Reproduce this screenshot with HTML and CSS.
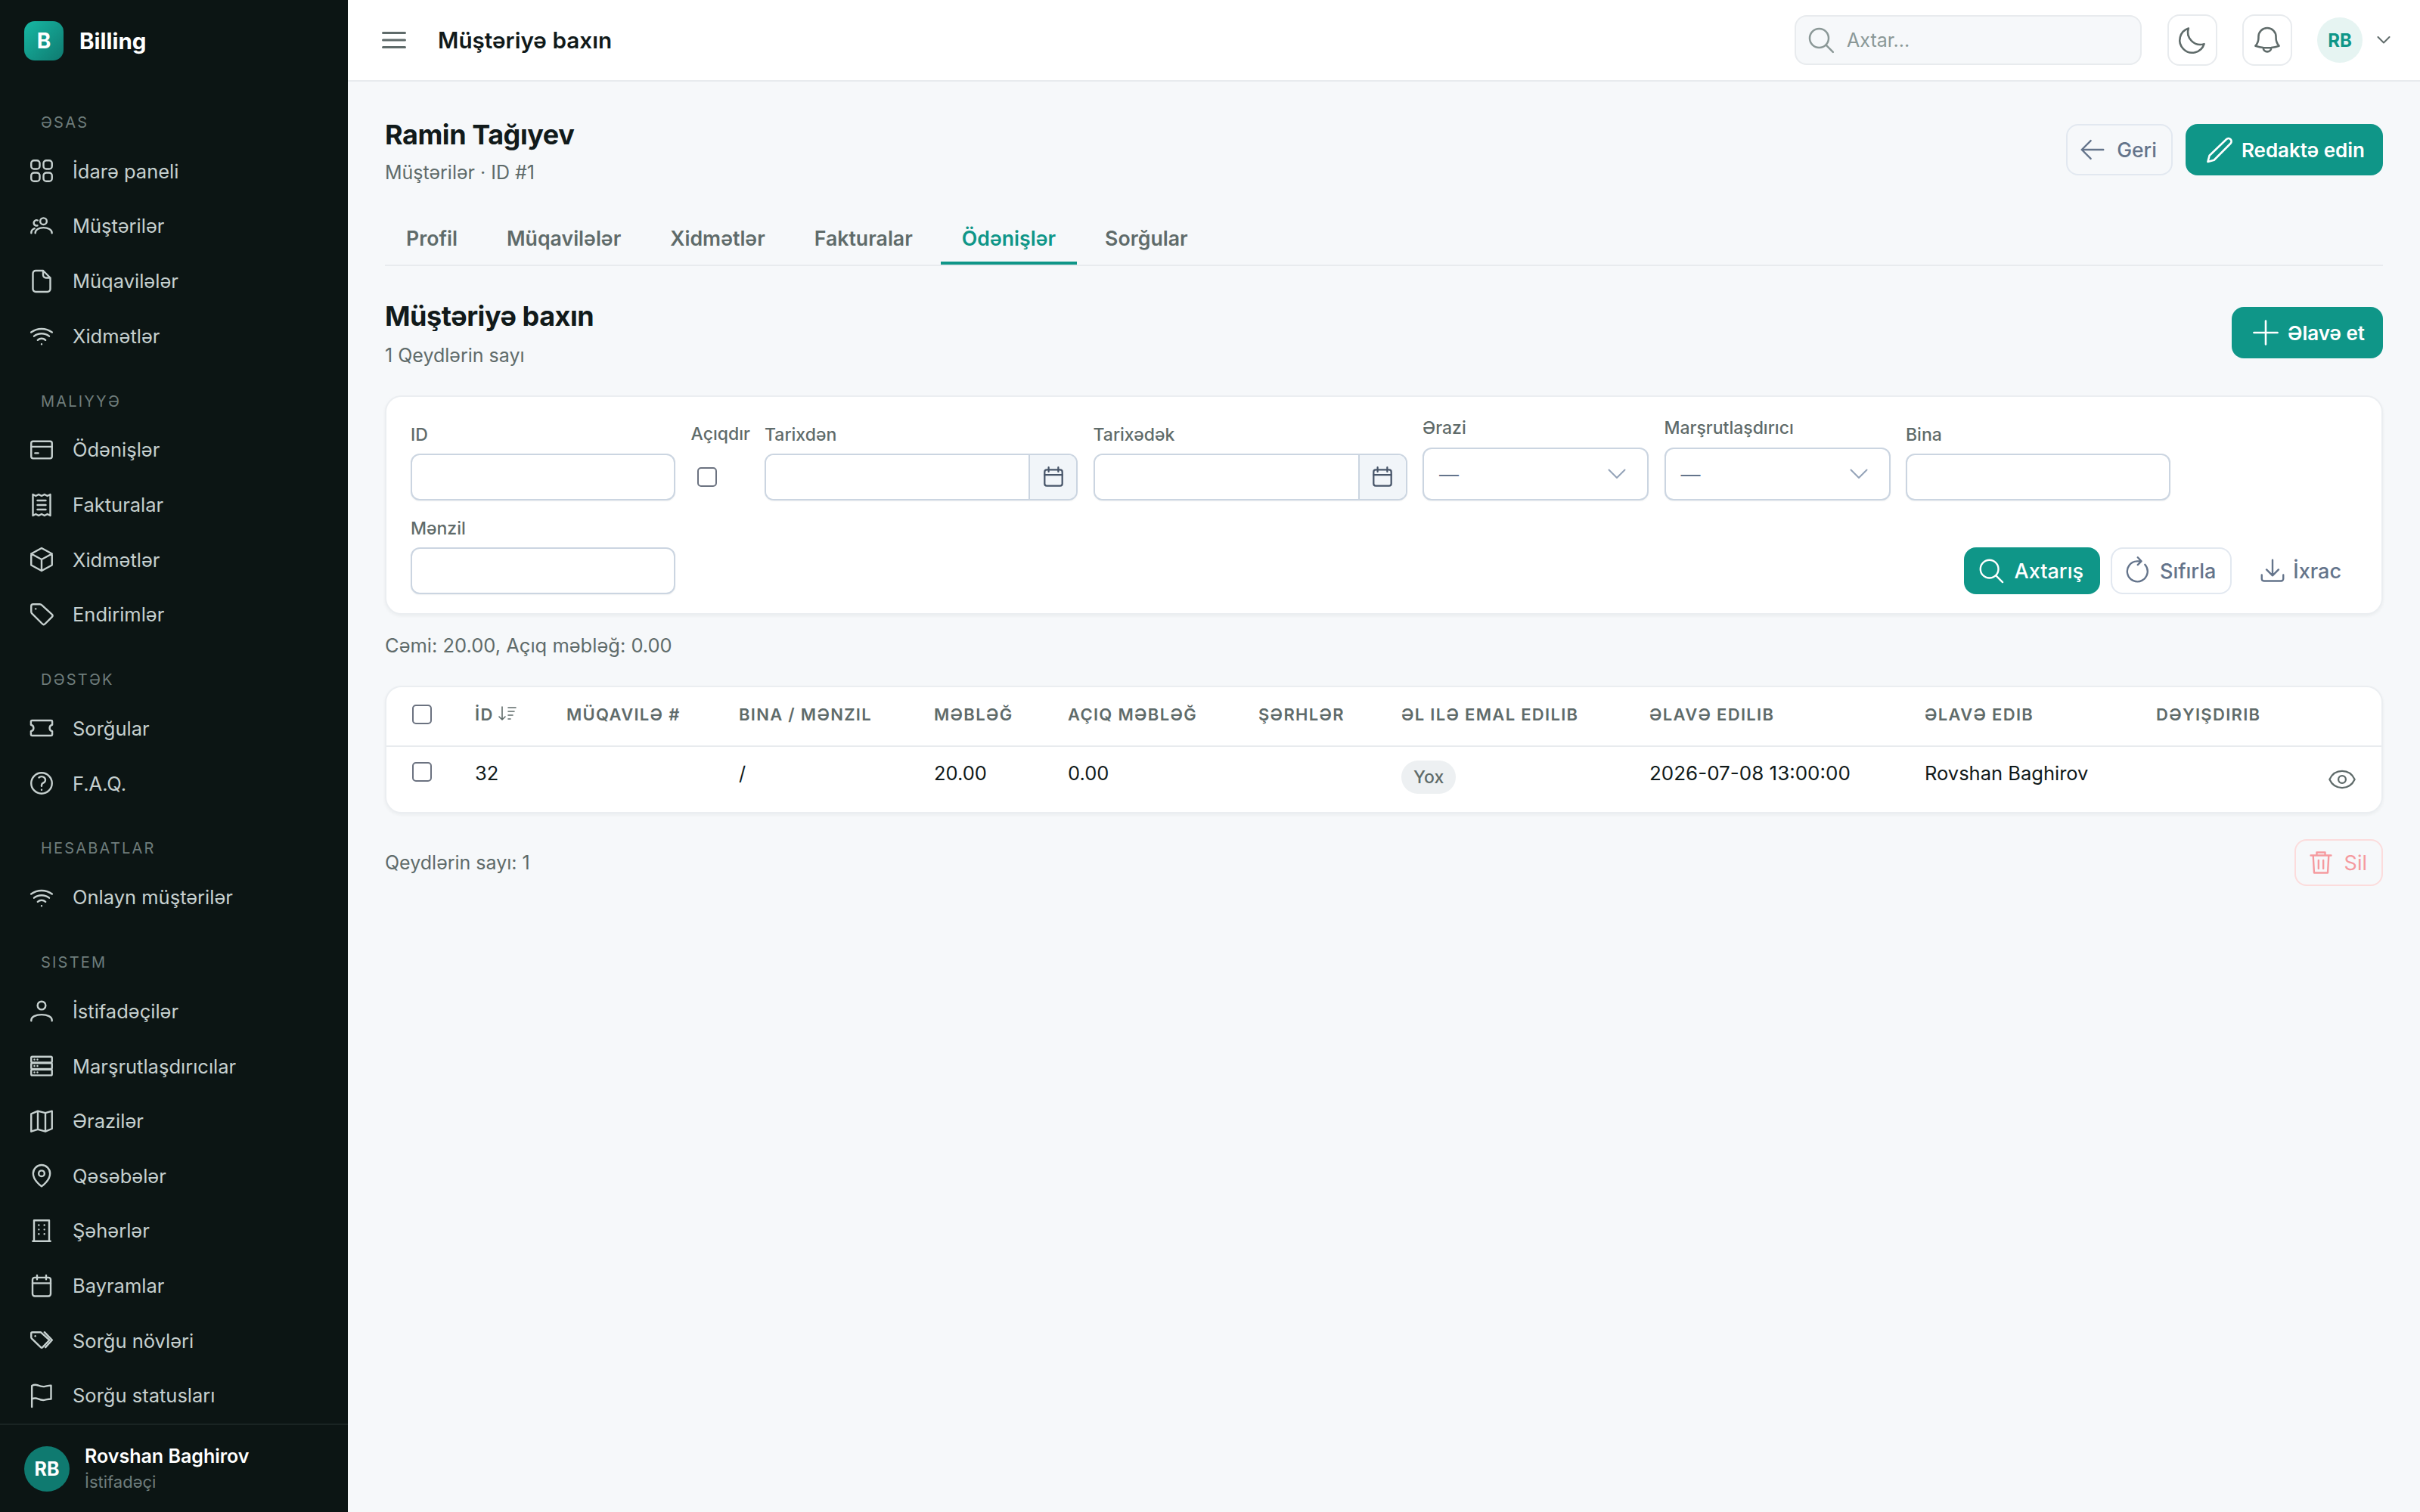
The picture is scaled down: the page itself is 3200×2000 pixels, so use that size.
FILE: index.html
```html
<!DOCTYPE html>
<html lang="az">
  <head>
    <meta charset="utf-8">
    <title>Müştəriyə baxın</title>
    <link rel="stylesheet" href="styles.css">
  </head>
  <body>
    <div class="app">
      <aside class="sidebar">
        <div class="brand">
          <span class="brand-logo">B</span>
          <span class="brand-name">Billing</span>
        </div>
        <nav class="nav">
          <div class="nav-label">ƏSAS</div>
          <a class="nav-item"><svg class="nav-icon" viewBox="0 0 24 24"><path d="M3.75 6A2.25 2.25 0 0 1 6 3.75h2.25A2.25 2.25 0 0 1 10.5 6v2.25a2.25 2.25 0 0 1-2.25 2.25H6a2.25 2.25 0 0 1-2.25-2.25V6ZM3.75 15.75A2.25 2.25 0 0 1 6 13.5h2.25a2.25 2.25 0 0 1 2.25 2.25V18a2.25 2.25 0 0 1-2.25 2.25H6A2.25 2.25 0 0 1 3.75 18v-2.25ZM13.5 6a2.25 2.25 0 0 1 2.25-2.25H18A2.25 2.25 0 0 1 20.25 6v2.25A2.25 2.25 0 0 1 18 10.5h-2.25a2.25 2.25 0 0 1-2.25-2.25V6ZM13.5 15.75a2.25 2.25 0 0 1 2.25-2.25H18a2.25 2.25 0 0 1 2.25 2.25V18A2.25 2.25 0 0 1 18 20.25h-2.25A2.25 2.25 0 0 1 13.5 18v-2.25Z"/></svg>İdarə paneli</a>
          <a class="nav-item"><svg class="nav-icon" viewBox="0 0 24 24"><circle cx="13.5" cy="8.2" r="2.6"/><path d="M7 17.5c0-2.6 2.9-4.2 6.5-4.2s6.7 1.6 6.7 4.2M3.8 17.5c0-1.8.9-3 2.6-3.6M8.7 11.6a2.2 2.2 0 1 1-1.4-4.2c.6-.2 1.1-.1 1.6.1"/></svg>Müştərilər</a>
          <a class="nav-item"><svg class="nav-icon" viewBox="0 0 24 24"><path d="M13.2 3.6H7.3a2.2 2.2 0 0 0-2.2 2.2v12.4a2.2 2.2 0 0 0 2.2 2.2h9.4a2.2 2.2 0 0 0 2.2-2.2V9.3Zm0 0v3.5a2.2 2.2 0 0 0 2.2 2.2h3.5"/></svg>Müqavilələr</a>
          <a class="nav-item"><svg class="nav-icon" viewBox="0 0 24 24"><path d="M8.9 15.5a4.6 4.6 0 0 1 6.2 0M6 12.4c3.4-2.7 8.6-2.7 12 0M3.7 9.3c4.9-3.6 11.700-3.6 16.6 0M12 18.7h.01"/></svg>Xidmətlər</a>

          <div class="nav-label">MALIYYƏ</div>
          <a class="nav-item"><svg class="nav-icon" viewBox="0 0 24 24"><rect x="3.75" y="5.2" width="16.5" height="13.6" rx="1.5"/><path d="M3.75 9.5h16.5M6.8 14.6h2.6"/></svg>Ödənişlər</a>
          <a class="nav-item"><svg class="nav-icon" viewBox="0 0 24 24"><path d="M5.1 3.6 7.4 4.8 9.7 3.6 12 4.8l2.3-1.2 2.3 1.2 2.3-1.2v16.8l-2.3-1.2-2.3 1.2-2.3-1.2-2.3 1.2-2.3-1.2-2.3 1.2ZM8.7 8.4h6.6M8.7 12h6.6M8.7 15.6h6.6"/></svg>Fakturalar</a>
          <a class="nav-item"><svg class="nav-icon" viewBox="0 0 24 24"><path d="m20.25 7.5-8.25-4.5-8.25 4.5m16.5 0L12 12m8.25-4.5v9L12 21l-8.25-4.5v-9M3.75 7.5 12 12m0 0v9"/></svg>Xidmətlər</a>
          <a class="nav-item"><svg class="nav-icon" viewBox="0 0 24 24"><path d="M9.568 3.75H5.25a1.5 1.5 0 0 0-1.5 1.5v4.318c0 .597.237 1.17.659 1.591l8.2 8.2c.6.6 1.5.6 2.1 0l5.5-5.5c.6-.6.6-1.5 0-2.1l-8.05-7.3a2.25 2.25 0 0 0-1.591-.709Z"/><path d="M7.3 7.4h.01"/></svg>Endirimlər</a>

          <div class="nav-label">DƏSTƏK</div>
          <a class="nav-item"><svg class="nav-icon" viewBox="0 0 24 24"><path d="M4.3 6h15.4a.75.75 0 0 1 .75.75v2.7a2.6 2.6 0 0 0 0 5.1v2.7a.75.75 0 0 1-.75.75H4.3a.75.75 0 0 1-.75-.75v-2.7a2.6 2.6 0 0 0 0-5.1v-2.7A.75.75 0 0 1 4.3 6Z"/></svg>Sorğular</a>
          <a class="nav-item"><svg class="nav-icon" viewBox="0 0 24 24"><path d="M9.879 7.519c1.171-1.025 3.071-1.025 4.242 0 1.172 1.025 1.172 2.687 0 3.712-.203.179-.43.326-.67.442-.745.361-1.45.999-1.45 1.827v.75M20.25 12a8.25 8.25 0 1 1-16.5 0 8.25 8.25 0 0 1 16.5 0Zm-8.25 5.25h.01"/></svg>F.A.Q.</a>

          <div class="nav-label">HESABATLAR</div>
          <a class="nav-item"><svg class="nav-icon" viewBox="0 0 24 24"><path d="M8.9 15.5a4.6 4.6 0 0 1 6.2 0M6 12.4c3.4-2.7 8.6-2.7 12 0M3.7 9.3c4.9-3.6 11.7-3.6 16.6 0M12 18.7h.01"/></svg>Onlayn müştərilər</a>

          <div class="nav-label">SISTEM</div>
          <a class="nav-item"><svg class="nav-icon" viewBox="0 0 24 24"><circle cx="12" cy="7.8" r="3.2"/><path d="M3.8 20v-.6c0-2.7 3.5-4.3 8.2-4.3s8.2 1.6 8.2 4.3v.6"/></svg>İstifadəçilər</a>
          <a class="nav-item"><svg class="nav-icon" viewBox="0 0 24 24"><rect x="3.75" y="4.6" width="16.5" height="4.6" rx=".8"/><rect x="3.75" y="9.7" width="16.5" height="4.6" rx=".8"/><rect x="3.75" y="14.8" width="16.5" height="4.6" rx=".8"/><path d="M6.3 6.9h.01M8.7 6.9h.01M6.3 12h.01M8.7 12h.01M6.3 17.1h.01M8.7 17.1h.01"/></svg>Marşrutlaşdırıcılar</a>
          <a class="nav-item"><svg class="nav-icon" viewBox="0 0 24 24"><path d="M9 4v14.5M15 5.5V20M9 4 3.75 6.2v14l5.25-1.7 6 1.7 5.25-2.2v-14L15 5.5Z"/></svg>Ərazilər</a>
          <a class="nav-item"><svg class="nav-icon" viewBox="0 0 24 24"><circle cx="12" cy="10.3" r="2.3"/><path d="M18.7 10.3c0 5.6-6.7 10.3-6.7 10.3s-6.7-4.7-6.7-10.3a6.7 6.7 0 1 1 13.4 0Z"/></svg>Qəsəbələr</a>
          <a class="nav-item"><svg class="nav-icon" viewBox="0 0 24 24"><path d="M6 20.25V3.75h12v16.5M5 20.25h14M9.8 7.5h.01M14.2 7.5h.01M9.8 11h.01M14.2 11h.01M9.8 14.5h.01M14.2 14.5h.01"/></svg>Şəhərlər</a>
          <a class="nav-item"><svg class="nav-icon" viewBox="0 0 24 24"><rect x="4.8" y="5.3" width="14.4" height="14.8" rx="1.8"/><path d="M8.4 3.5v3.2M15.6 3.5v3.2M4.8 9.8h14.4"/></svg>Bayramlar</a>
          <a class="nav-item"><svg class="nav-icon" viewBox="0 0 24 24"><path d="M3.75 6.5a1 1 0 0 1 1-1h6.5l7 6.2-5.5 5.8a1 1 0 0 1-1.4 0L4.2 10.6a1.5 1.5 0 0 1-.45-1Z"/><path d="m14.3 5.5 6 6.2-5.2 5.8"/><path d="M7 8.5h.01"/></svg>Sorğu növləri</a>
          <a class="nav-item"><svg class="nav-icon" viewBox="0 0 24 24"><path d="M4.3 21V4.2c1.5-.9 3.1-1 5-.3 2 .9 3.7 1.2 5.5.8 1.6-.3 3-.8 4.7-.7v10.7c-1.7-.1-3 .4-4.7.7-1.8.4-3.5.1-5.5-.8-1.900-.7-3.5-.6-5 .3"/></svg>Sorğu statusları</a>
        </nav>
        <div class="side-user">
          <span class="side-avatar">RB</span>
          <div>
            <div class="side-name">Rovshan Baghirov</div>
            <div class="side-role">İstifadəçi</div>
          </div>
        </div>
      </aside>

      <div class="main">
        <header class="topbar">
          <svg class="menu-icon" viewBox="0 0 34 24"><path d="M2.5 2.5h29M2.5 12h29M2.5 21.5h29"/></svg>
          <div class="topbar-title">Müştəriyə baxın</div>
          <div class="search">
            <svg class="search-icon" viewBox="0 0 24 24"><circle cx="10.5" cy="10.5" r="7.5"/><path d="m16 16 5.5 5.5"/></svg>
            <span>Axtar...</span>
          </div>
          <button class="icon-btn"><svg viewBox="0 0 24 24"><path d="M20.5 14.8A9 9 0 0 1 9.2 3.5a9 9 0 1 0 11.3 11.3Z"/></svg></button>
          <button class="icon-btn"><svg viewBox="0 0 24 24"><path d="M14.9 17.5a24 24 0 0 0 5.6-1.3 8.9 8.9 0 0 1-2.2-5.9V9.6a6.3 6.3 0 0 0-12.6 0v.7a8.9 8.9 0 0 1-2.2 5.9c1.8.6 3.7 1.1 5.6 1.3m5.800 0a36 36 0 0 1-5.8 0m5.8 0a2.9 2.9 0 1 1-5.8 0"/></svg></button>
          <span class="top-avatar">RB</span>
          <svg class="top-chevron" viewBox="0 0 18 10"><path d="m1.5 1 7.5 7.5L16.5 1"/></svg>
        </header>

        <main class="content">
          <div class="page-head">
            <div>
              <h1 class="page-title">Ramin Tağıyev</h1>
              <div class="page-sub">Müştərilər · ID #1</div>
            </div>
            <div class="head-actions">
              <button class="btn btn-light"><svg viewBox="0 0 24 24"><path d="M10.5 19.5 3 12l7.5-7.5M3 12h18"/></svg>Geri</button>
              <button class="btn btn-primary"><svg viewBox="0 0 24 24"><path d="M16.9 4.5a2.1 2.1 0 0 1 3 3L8 19.5l-4.5 1.2L4.7 16.2Z"/></svg>Redaktə edin</button>
            </div>
          </div>

          <div class="tabs">
            <a class="tab">Profil</a>
            <a class="tab">Müqavilələr</a>
            <a class="tab">Xidmətlər</a>
            <a class="tab">Fakturalar</a>
            <a class="tab tab-active">Ödənişlər</a>
            <a class="tab">Sorğular</a>
          </div>

          <div class="section-head">
            <div>
              <h2 class="page-title">Müştəriyə baxın</h2>
              <div class="page-sub">1 Qeydlərin sayı</div>
            </div>
            <button class="btn btn-primary"><svg viewBox="0 0 24 24"><path d="M12 3.5v17M3.5 12h17"/></svg>Əlavə et</button>
          </div>

          <form class="filters">
            <label class="field field-wide"><span class="field-label">ID</span><input class="input" type="text"></label>
            <label class="field field-check"><span class="field-label label-up">Açıqdır</span><input class="check check-filter" type="checkbox"></label>
            <label class="field field-date"><span class="field-label">Tarixdən</span>
              <span class="date-input"><input class="date-text" type="text"><span class="date-addon"><svg viewBox="0 0 24 24"><rect x="3.75" y="5.25" width="16.5" height="15" rx="2"/><path d="M7.5 3v4M16.5 3v4M3.75 10h16.5"/></svg></span></span>
            </label>
            <label class="field field-date field-date2"><span class="field-label">Tarixədək</span>
              <span class="date-input"><input class="date-text" type="text"><span class="date-addon"><svg viewBox="0 0 24 24"><rect x="3.75" y="5.25" width="16.5" height="15" rx="2"/><path d="M7.5 3v4M16.5 3v4M3.75 10h16.5"/></svg></span></span>
            </label>
            <div class="field field-select"><span class="field-label label-up">Ərazi</span>
              <div class="select"><span>—</span><svg viewBox="0 0 24 14"><path d="m1.5 1.5 10.5 10.5 10.5-10.5"/></svg></div>
            </div>
            <div class="field field-select"><span class="field-label label-up">Marşrutlaşdırıcı</span>
              <div class="select"><span>—</span><svg viewBox="0 0 24 14"><path d="m1.5 1.5 10.5 10.5 10.5-10.5"/></svg></div>
            </div>
            <label class="field field-wide"><span class="field-label">Bina</span><input class="input" type="text"></label>
            <label class="field field-wide"><span class="field-label">Mənzil</span><input class="input" type="text"></label>
            <div class="filter-actions">
              <button class="btn btn-primary btn-sm btn-search" type="button"><svg viewBox="0 0 24 24"><circle cx="10.5" cy="10.5" r="7.5"/><path d="m16 16 5.5 5.5"/></svg>Axtarış</button>
              <button class="btn btn-white btn-sm" type="button"><svg viewBox="0 0 24 24"><path d="M18.5 6.8A8.5 8.5 0 1 1 12 4h3M12.500 .8 15.5 4l-3 3"/></svg>Sıfırla</button>
              <button class="btn btn-ghost btn-sm" type="button"><svg viewBox="0 0 24 24"><path d="M3 15.5v3.2a1.8 1.8 0 0 0 1.8 1.8h14.4a1.8 1.8 0 0 0 1.8-1.8v-3.2M12 3v13m-5-5 5 5 5-5"/></svg>İxrac</button>
            </div>
          </form>

          <div class="summary">Cəmi: 20.00, Açıq məbləğ: 0.00</div>

          <div class="table-card">
            <table class="data-table">
              <colgroup>
                <col class="col-check"><col class="col-id"><col class="col-contract"><col class="col-building">
                <col class="col-amount"><col class="col-open"><col class="col-notes"><col class="col-manual">
                <col class="col-added"><col class="col-by"><col class="col-changed"><col>
              </colgroup>
              <thead>
                <tr>
                  <th class="cell-check"><input class="check" type="checkbox"></th>
                  <th>İD <svg class="sort-icon" viewBox="0 0 24 20"><path d="M5 1v17M1 14l4 4 4-4M13 2h10M13 7h8M13 12h6M13 17h3"/></svg></th>
                  <th>MÜQAVILƏ #</th>
                  <th>BINA / MƏNZIL</th>
                  <th>MƏBLƏĞ</th>
                  <th>AÇIQ MƏBLƏĞ</th>
                  <th>ŞƏRHLƏR</th>
                  <th>ƏL ILƏ EMAL EDILIB</th>
                  <th>ƏLAVƏ EDILIB</th>
                  <th>ƏLAVƏ EDIB</th>
                  <th>DƏYIŞDIRIB</th>
                  <th></th>
                </tr>
              </thead>
              <tbody>
                <tr>
                  <td class="cell-check"><input class="check" type="checkbox"></td>
                  <td>32</td>
                  <td></td>
                  <td>/</td>
                  <td>20.00</td>
                  <td>0.00</td>
                  <td></td>
                  <td><span class="badge">Yox</span></td>
                  <td class="cell-date">2026-07-08 13:00:00</td>
                  <td>Rovshan Baghirov</td>
                  <td></td>
                  <td class="cell-action"><svg class="eye-icon" viewBox="0 0 24 24"><path d="M2.5 12C4.6 7.5 8 5.7 12 5.7s7.4 1.8 9.5 6.3c-2.1 4.5-5.5 6.3-9.5 6.3s-7.4-1.8-9.5-6.3Z"/><circle cx="12" cy="12" r="2.8"/></svg></td>
                </tr>
              </tbody>
            </table>
          </div>

          <div class="table-foot">
            <span>Qeydlərin sayı: 1</span>
            <button class="btn btn-danger btn-sm"><svg viewBox="0 0 24 24"><path d="M3.5 6h17M8.5 6V3.500h7V6M5.500 6l.8 14.5h11.4L18.5 6M10 10v7M14 10v7"/></svg>Sil</button>
          </div>
        </main>
      </div>
    </div>
  </body>
</html>
```

FILE: styles.css
```css
* {
  box-sizing: border-box;
}

html,
body {
  margin: 0;
  height: 100%;
}

body {
  font-family: Inter, "Noto Sans", sans-serif;
  font-size: 28px;
  color: #111a1a;
  background-color: #f6f8fa;
}

button,
input {
  font-family: inherit;
}

svg {
  fill: none;
  stroke: currentColor;
  stroke-linecap: round;
  stroke-linejoin: round;
  flex-shrink: 0;
}

.app {
  display: flex;
  height: 2000px;
  overflow: hidden;
}

/* sidebar */
.sidebar {
  display: flex;
  flex-direction: column;
  flex: 0 0 460px;
  background-color: #0c1514;
  color: #c6d0cf;
}

.brand {
  display: flex;
  align-items: center;
  gap: 21px;
  height: 108px;
  padding: 0 32px;
  flex-shrink: 0;
}

.brand-logo {
  display: flex;
  align-items: center;
  justify-content: center;
  width: 52px;
  height: 52px;
  border-radius: 14px;
  background: linear-gradient(135deg, #17b8a4, #0f7a70);
  color: #fff;
  font-size: 28px;
  font-weight: 700;
}

.brand-name {
  color: #fff;
  font-size: 29.5px;
  font-weight: 700;
}

.nav {
  flex: 1;
  padding-top: 40px;
  overflow: hidden;
}

.nav-label {
  height: 28px;
  margin: 36px 0 14px;
  padding-left: 54px;
  color: #6f7d7c;
  font-size: 20px;
  line-height: 28px;
  letter-spacing: 2.2px;
}

.nav-label:first-child {
  margin-top: 0;
}

.nav-item {
  display: flex;
  align-items: center;
  gap: 21px;
  height: 72.65px;
  padding-left: 35px;
  font-size: 25.5px;
}

.nav-icon {
  width: 40px;
  height: 40px;
  stroke-width: 1.45;
}

.side-user {
  display: flex;
  align-items: center;
  gap: 20px;
  flex-shrink: 0;
  height: 117px;
  padding: 0 32px;
  border-top: 2px solid #1a2423;
}

.side-avatar {
  display: flex;
  align-items: center;
  justify-content: center;
  width: 60px;
  height: 60px;
  border-radius: 50%;
  background-color: #0f7a70;
  color: #fff;
  font-size: 25px;
  font-weight: 700;
}

.side-name {
  color: #fff;
  font-size: 25px;
  font-weight: 600;
  line-height: 34px;
}

.side-role {
  color: #6f7d7c;
  font-size: 22px;
  line-height: 34px;
}

/* topbar */
.main {
  flex: 1;
  min-width: 0;
}

.topbar {
  display: flex;
  align-items: center;
  height: 108px;
  padding: 0 39px 0 44px;
  background-color: #fff;
  border-bottom: 2px solid #e8ebee;
}

.menu-icon {
  width: 34px;
  height: 24px;
  stroke: #5f6b6a;
  stroke-width: 3;
}

.topbar-title {
  margin-left: 41px;
  font-size: 29.7px;
  font-weight: 600;
  flex: 1;
}

.search {
  display: flex;
  align-items: center;
  gap: 14px;
  width: 459px;
  height: 66px;
  margin-right: 34px;
  padding: 0 13px;
  background-color: #f6f8fa;
  border: 2px solid #e8ebee;
  border-radius: 16px;
  color: #8b9897;
  font-size: 25px;
}

.search-icon {
  width: 40px;
  height: 40px;
  stroke-width: 1.5;
}

.icon-btn {
  display: flex;
  align-items: center;
  justify-content: center;
  width: 66px;
  height: 68px;
  padding: 0;
  margin-right: 33px;
  background-color: #fff;
  border: 2px solid #e8ebee;
  border-radius: 16px;
  color: #5f6b6a;
}

.icon-btn svg {
  width: 44px;
  height: 44px;
  stroke-width: 1.4;
}

.top-avatar {
  display: flex;
  align-items: center;
  justify-content: center;
  width: 60px;
  height: 60px;
  border-radius: 50%;
  background-color: #e6f4f2;
  color: #0f9688;
  font-size: 24px;
  font-weight: 700;
}

.top-chevron {
  width: 18px;
  height: 10px;
  margin-left: 19px;
  stroke: #5f6b6a;
  stroke-width: 2;
}

/* page */
.content {
  padding: 56px 49px 0 49px;
}

.page-head,
.section-head {
  display: flex;
  justify-content: space-between;
  align-items: flex-start;
}

.page-head {
  height: 116px;
}

.head-actions {
  display: flex;
  gap: 17px;
}

.page-title {
  margin: -2px 0 0;
  font-size: 36px;
  font-weight: 700;
  line-height: 32px;
  letter-spacing: -0.45px;
}

.page-sub {
  margin-top: 19px;
  color: #5f6b6a;
  font-size: 25px;
  line-height: 30px;
}

.btn {
  display: inline-flex;
  align-items: center;
  gap: 7px;
  height: 68px;
  padding: 0 22px 0 21px;
  border: 2px solid transparent;
  border-radius: 16px;
  font-size: 26px;
  font-weight: 500;
  white-space: nowrap;
}

.btn svg {
  width: 44px;
  height: 44px;
  stroke-width: 1.4;
}

.btn-primary {
  background-color: #0f9688;
  color: #fff;
  font-weight: 600;
}

.btn-light {
  gap: 13px;
  padding: 0 19px 0 14px;
  background-color: transparent;
  border-color: #e2e8f0;
  color: #64748b;
  font-size: 26.5px;
}

.btn-light svg {
  width: 38px;
  height: 38px;
  stroke-width: 1.5;
}

.btn-white {
  gap: 11px;
  padding: 0 19px 0 14px;
  background-color: #fff;
  border-color: #e2e8f0;
  color: #64748b;
}

.btn-ghost {
  gap: 8px;
  padding: 0 19px;
  background-color: transparent;
  color: #64748b;
}

.btn-sm {
  height: 62px;
  font-size: 27px;
}

.btn-sm svg {
  width: 38px;
  height: 38px;
  stroke-width: 1.5;
}

.btn-search {
  gap: 12px;
  padding: 0 20px 0 15px;
  font-weight: 500;
}

.btn-danger {
  gap: 12px;
  padding: 0 19px 0 14px;
  background-color: transparent;
  border-color: #fcdcdc;
  color: #f59a9f;
  font-weight: 400;
}

/* tabs */
.tabs {
  display: flex;
  gap: 9px;
  height: 72px;
  border-bottom: 2px solid #e8ebee;
}

.tab {
  height: 72px;
  padding: 0 28px;
  color: #5f6b6a;
  font-size: 26.7px;
  font-weight: 600;
  line-height: 70px;
}

.tab-active {
  height: 70px;
  color: #0f9688;
  border-bottom: 4px solid #0f9688;
}

/* section */
.section-head {
  height: 117px;
  margin-top: 54px;
}

.section-head .page-title {
  margin-top: -4px;
}

.section-head .page-sub {
  margin-top: 21px;
}

/* filter card */
.filters {
  display: flex;
  flex-wrap: wrap;
  align-items: flex-end;
  column-gap: 20.5px;
  row-gap: 22px;
  padding: 27px 32px 25px;
  background-color: #fff;
  border: 2px solid #ebeef1;
  border-radius: 22px;
  box-shadow: 0 2px 4px rgba(20, 30, 40, 0.05);
}

.field {
  display: flex;
  flex-direction: column;
}

.field-label {
  height: 40px;
  color: #5f6b6a;
  font-size: 23px;
  font-weight: 500;
  line-height: 30px;
  white-space: nowrap;
}

.label-up {
  position: relative;
  top: -1px;
}

.field-wide {
  width: 350px;
}

.field-check {
  width: 77px;
}

.field-date {
  width: 414px;
}

.field-date2 {
  width: 415px;
}

.field-select {
  width: 299px;
}

.input,
.date-input,
.select {
  display: flex;
  height: 62px;
  background-color: #fff;
  border: 2px solid #cbd5e1;
  border-radius: 12px;
  box-shadow: 0 1px 2px rgba(20, 30, 40, 0.06);
}

.input {
  width: 100%;
}

.date-input {
  overflow: hidden;
}

.date-text {
  flex: 1;
  min-width: 0;
  border: 0;
  outline: 0;
}

.date-addon {
  display: flex;
  align-items: center;
  justify-content: center;
  width: 63px;
  background-color: #f1f5f9;
  border-left: 2px solid #cbd5e1;
  color: #475569;
}

.date-addon svg {
  width: 34px;
  height: 34px;
  stroke-width: 1.6;
}

.select {
  align-items: center;
  justify-content: space-between;
  height: 70px;
  padding: 0 28px 0 20px;
  color: #64748b;
  font-size: 26px;
}

.select svg {
  width: 24px;
  height: 14px;
  stroke: #94a3b8;
  stroke-width: 2;
}

.check {
  appearance: none;
  display: block;
  width: 26px;
  height: 26px;
  margin: 0;
  background-color: #fff;
  border: 2px solid #6b7280;
  border-radius: 5px;
}

.check-filter {
  margin: 18px 0 18px 8px;
}

.filter-actions {
  display: flex;
  gap: 14px;
  margin-left: auto;
}

/* table */
.summary {
  margin-top: 26px;
  color: #5f6b6a;
  font-size: 25.5px;
  line-height: 30px;
}

.table-card {
  margin-top: 38px;
  background-color: #fff;
  border: 2px solid #ebeef1;
  border-radius: 22px;
  box-shadow: 0 2px 4px rgba(20, 30, 40, 0.05);
  overflow: hidden;
}

.data-table {
  width: 100%;
  table-layout: fixed;
  border-collapse: collapse;
}

.col-check { width: 117px; }
.col-id { width: 121px; }
.col-contract { width: 228px; }
.col-building { width: 258px; }
.col-amount { width: 177px; }
.col-open { width: 252px; }
.col-notes { width: 189px; }
.col-manual { width: 328px; }
.col-added { width: 364px; }
.col-by { width: 306px; }
.col-changed { width: 200px; }

.data-table th {
  height: 78px;
  padding: 0 0 6px;
  text-align: left;
  color: #5f6b6a;
  font-size: 22px;
  font-weight: 600;
  letter-spacing: 1.3px;
  white-space: nowrap;
  border-bottom: 2px solid #e8ebee;
}

.data-table td {
  height: 87px;
  padding: 18px 0 0;
  vertical-align: top;
  font-size: 25.5px;
  line-height: 34px;
  white-space: nowrap;
}

.data-table .cell-check {
  padding-left: 34px;
}

.data-table td.cell-check {
  padding-top: 20px;
}

.data-table .cell-date {
  font-size: 26px;
}

.sort-icon {
  width: 24px;
  height: 20px;
  stroke: #5f6b6a;
  stroke-width: 1.6;
  vertical-align: -1px;
}

.badge {
  display: inline-block;
  height: 44px;
  padding: 0 16px;
  border-radius: 22px;
  background-color: #edf0f2;
  color: #5f6b6a;
  font-size: 23px;
  font-weight: 500;
  line-height: 44px;
}

.data-table .cell-action {
  padding-right: 31px;
  padding-top: 22px;
  text-align: right;
  color: #5f6b6a;
}

.eye-icon {
  width: 42px;
  height: 42px;
  stroke-width: 1.3;
}

.table-foot {
  display: flex;
  justify-content: space-between;
  align-items: center;
  margin-top: 34px;
  color: #5f6b6a;
  font-size: 25px;
}
```
